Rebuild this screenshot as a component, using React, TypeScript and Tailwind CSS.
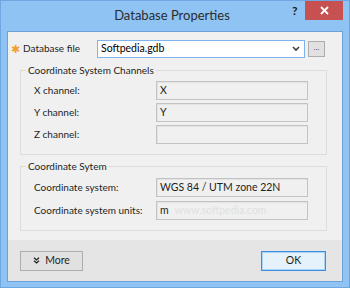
import React from "react";

const font = { fontFamily: 'Lato, "Open Sans", sans-serif' };

function ReadOnlyField({ value, watermark }: { value?: string; watermark?: string }) {
  return (
    <div className="w-[152px] h-[19px] border border-[#c3c3c3] bg-[#f0f0f0] shadow-[inset_1px_1px_0_#e3e3e3] flex items-center px-[3px] text-[10.5px] text-[#1e1e1e] overflow-hidden whitespace-nowrap">
      <span>{value}</span>
      {watermark && <span className="ml-[6px] text-[#e0e0e0]">{watermark}</span>}
    </div>
  );
}

function Row({ label, value, watermark }: { label: string; value?: string; watermark?: string }) {
  return (
    <div className="flex items-center h-[19px]">
      <div className="w-[135px] pl-[13px] text-[10px] text-[#1e1e1e] whitespace-nowrap">{label}</div>
      <ReadOnlyField value={value} watermark={watermark} />
    </div>
  );
}

function Group({ title, children }: { title: string; children: React.ReactNode }) {
  return (
    <fieldset className="border border-[#dcdcdc] ml-[12px] mr-[15px] pb-[10px] pt-[2px]">
      <legend className="ml-[5px] px-[2px] text-[10px] text-[#1e1e1e] leading-[12px]">{title}</legend>
      <div className="flex flex-col gap-[3px]">{children}</div>
    </fieldset>
  );
}

export default function App() {
  return (
    <div className="w-[350px] h-[288px] bg-[#8fc3f3] flex flex-col border border-[#6fa8e0]" style={font}>
      <div className="h-[30px] flex items-start">
        <div className="flex-1" />
        <div className="pt-[5px] text-[13px] leading-[18px] text-[#2b2b2b]">Database Properties</div>
        <div className="flex-1 flex justify-end items-start pr-[6px]">
          <div className="w-[12px] mt-[3px] text-[12px] font-bold leading-[14px] text-[#1a1a1a]">?</div>
          <div className="w-[38px] h-[19px] ml-[1px] bg-[#c75050] flex items-center justify-center">
            <svg width="9" height="9" viewBox="0 0 9 9">
              <path d="M1 1 L8 8 M8 1 L1 8" stroke="#ffffff" strokeWidth="1.8" />
            </svg>
          </div>
        </div>
      </div>

      <div className="mx-[6px] h-[251px] border border-[#6aa3da] bg-[#f0f0f0] flex flex-col">
        <div className="flex items-center pt-[7px] h-[26px]">
          <div className="w-[89px] pl-[3px] flex items-center text-[10px] text-[#1e1e1e] whitespace-nowrap">
            <span className="text-[#f0a030] text-[11px] leading-[10px] mr-[3px]">✱</span>
            <span>Database file</span>
          </div>
          <div className="w-[208px] h-[18px] border border-[#7eb4ea] bg-white flex items-center pl-[3px] pr-[4px] text-[10.5px] text-[#000]">
            <span className="flex-1">Softpedia.gdb</span>
            <svg width="8" height="6" viewBox="0 0 8 6">
              <path d="M1 1 L4 4 L7 1" stroke="#404040" strokeWidth="1.6" fill="none" />
            </svg>
          </div>
          <div className="ml-[3px] w-[17px] h-[16px] border border-[#adadad] bg-[#e1e1e1] flex items-center justify-center text-[8px] leading-[8px] text-[#4a5a8a] pb-[3px]">
            ...
          </div>
        </div>

        <div className="mt-[6px]">
          <Group title="Coordinate System Channels">
            <div className="mt-[3px] flex flex-col gap-[3px]">
              <Row label="X channel:" value="X" />
              <Row label="Y channel:" value="Y" />
              <Row label="Z channel:" />
            </div>
          </Group>
        </div>

        <div className="mt-[5px]">
          <Group title="Coordinate Sytem">
            <div className="mt-[4px] flex flex-col gap-[4px]">
              <Row label="Coordinate system:" value="WGS 84 / UTM zone 22N" />
              <Row label="Coordinate system units:" value="m" watermark="www.softpedia.com" />
            </div>
          </Group>
        </div>

        <div className="mt-auto h-[41px] bg-[#e5e5e5] flex items-center justify-between pl-[12px] pr-[16px]">
          <div className="w-[63px] h-[20px] border border-[#adadad] bg-[#e1e1e1] flex items-center justify-center gap-[5px] text-[10.5px] text-[#1e1e1e]">
            <svg width="7" height="7" viewBox="0 0 7 7">
              <path d="M1 0.8 L3.5 3 L6 0.8 M1 3.8 L3.5 6 L6 3.8" stroke="#222" strokeWidth="1.3" fill="none" />
            </svg>
            <span>More</span>
          </div>
          <div className="w-[65px] h-[20px] border border-[#3c8fe0] bg-[#e5f1fb] shadow-[inset_0_0_0_1px_#a9d2f5] flex items-center justify-center text-[10.5px] text-[#1e1e1e]">
            OK
          </div>
        </div>
      </div>
    </div>
  );
}
